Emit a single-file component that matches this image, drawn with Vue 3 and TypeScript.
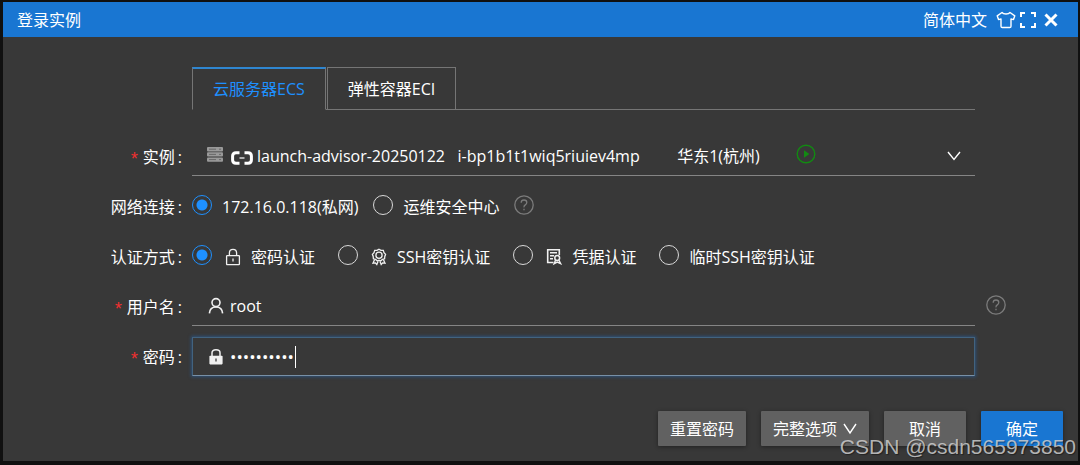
<script setup lang="ts">
import { ref } from 'vue'

type Tab = { id: string; label: string }
type AuthMode = { id: string; label: string; icon?: 'lock' | 'medal' | 'cert' }

const tabs: Tab[] = [
  { id: 'ecs', label: '云服务器ECS' },
  { id: 'eci', label: '弹性容器ECI' },
]
const activeTab = ref('ecs')

const gap = (n: number) => '\u00a0'.repeat(n)
const instances: string[] = [
  'launch-advisor-20250122' + gap(3) + 'i-bp1b1t1wiq5riuiev4mp' + gap(9) + '华东1(杭州)',
]
const instance = ref(instances[0])

const networks = [
  { id: 'private', label: '172.16.0.118(私网)' },
  { id: 'bastion', label: '运维安全中心' },
]
const network = ref('private')

const authModes: AuthMode[] = [
  { id: 'password', label: '密码认证', icon: 'lock' },
  { id: 'ssh', label: 'SSH密钥认证', icon: 'medal' },
  { id: 'credential', label: '凭据认证', icon: 'cert' },
  { id: 'temp', label: '临时SSH密钥认证' },
]
const auth = ref('password')

const username = ref('root')
const password = ref('xxxxxxxxxx')
</script>

<template>
  <div class="page">
    <section class="dialog" role="dialog" aria-labelledby="dialog-title">
      <header class="titlebar">
        <h1 id="dialog-title">登录实例</h1>
        <button type="button" class="plain lang">简体中文</button>
        <button type="button" class="plain" aria-label="主题">
          <svg width="20" height="18" viewBox="0 0 20 18" fill="none" stroke="#fff" stroke-width="1.4" stroke-linejoin="round">
            <path d="M6 1.5 L1.2 4.8 L2.5 8.6 L5 8 V15.2 Q5 16.5 6.3 16.5 H13.7 Q15 16.5 15 15.2 V8 L17.5 8.6 L18.8 4.8 L14 1.5 Q13 3 10 3 T6 1.5Z" />
          </svg>
        </button>
        <button type="button" class="plain" aria-label="全屏">
          <svg width="16" height="16" viewBox="0 0 16 16" fill="none" stroke="#fff" stroke-width="2">
            <path d="M1 5V1H5M11 1H15V5M15 11V15H11M5 15H1V11" />
          </svg>
        </button>
        <button type="button" class="plain close" aria-label="关闭">
          <svg width="14" height="14" viewBox="0 0 14 14" stroke="#fff" stroke-width="3">
            <path d="M1.5 1.5L12.5 12.5M12.5 1.5L1.5 12.5" />
          </svg>
        </button>
      </header>

      <form id="login" class="body" @submit.prevent>
        <div class="tabs" role="tablist">
          <button
            v-for="t in tabs"
            :key="t.id"
            type="button"
            role="tab"
            class="tab"
            :class="{ active: activeTab === t.id }"
            :aria-selected="activeTab === t.id"
            @click="activeTab = t.id"
          >{{ t.label }}</button>
        </div>

        <div class="row">
          <label class="label" for="instance"><span class="req">*</span>实例<i>:</i></label>
          <div class="field line">
            <div class="lead">
              <svg class="server" width="16" height="15" viewBox="0 0 16 15" fill="#9a9a9a">
                <rect width="16" height="4.4" rx="1" /><rect y="5.2" width="16" height="4.4" rx="1" /><rect y="10.4" width="16" height="4.4" rx="1" />
                <path d="M2 2.2H9M2 7.4H9M2 12.6H9M12 2.2H14M12 7.4H14M12 12.6H14" stroke="#5c5c5c" stroke-width="0.8" />
              </svg>
              <svg class="brand" width="22" height="14" viewBox="0 0 22 14" fill="none" stroke="#fff">
                <path d="M8.5 1.8H5Q1.6 1.8 1.6 5V9Q1.6 12.2 5 12.2H8.5M13.5 1.8H17Q20.4 1.8 20.4 5V9Q20.4 12.2 17 12.2H13.5" stroke-width="3" />
                <path d="M8.5 7H13.5" stroke-width="1.2" />
              </svg>
            </div>
            <select id="instance" v-model="instance">
              <option v-for="i in instances" :key="i" :value="i">{{ i }}</option>
            </select>
            <svg class="play" width="20" height="20" viewBox="0 0 20 20" fill="none" stroke="#128a12" stroke-width="1.4">
              <circle cx="10" cy="10" r="8.8" /><path d="M8 6.2V13.8L13.4 10Z" fill="#128a12" stroke="none" />
            </svg>
            <svg class="chev" width="14" height="10" viewBox="0 0 14 10" fill="none" stroke="#fff" stroke-width="1.4"><path d="M1 1L7 8.5L13 1" /></svg>
          </div>
        </div>

        <div class="row">
          <span id="net-label" class="label">网络连接<i>:</i></span>
          <div class="options networks" role="radiogroup" aria-labelledby="net-label">
            <label v-for="n in networks" :key="n.id" class="option">
              <input v-model="network" type="radio" name="network" :value="n.id" />
              <span>{{ n.label }}</span>
            </label>
            <button type="button" class="plain help" aria-label="帮助">
              <svg width="20" height="20" viewBox="0 0 20 20" fill="none" stroke="#7c7c7c" stroke-width="1.3">
                <circle cx="10" cy="10" r="9.2" /><path d="M7.2 7.8Q7.2 5 10 5T12.8 7.6Q12.8 9 11.3 9.9T10 12.4M10 13.8V15.2" />
              </svg>
            </button>
          </div>
        </div>

        <div class="row">
          <span id="auth-label" class="label">认证方式<i>:</i></span>
          <div class="options auths" role="radiogroup" aria-labelledby="auth-label">
            <label v-for="a in authModes" :key="a.id" class="option">
              <input v-model="auth" type="radio" name="auth" :value="a.id" />
              <svg v-if="a.icon" class="mode" width="16" height="18" viewBox="0 0 16 18" fill="none" stroke="#f0f0f0" stroke-width="1.3">
                <template v-if="a.icon === 'lock'">
                  <rect x="1.6" y="7.6" width="12.8" height="9" rx=".6" /><path d="M4.4 7.6V5Q4.4 1.4 8 1.4T11.6 5V7.6M8 10.5V13.6" />
                </template>
                <template v-else-if="a.icon === 'medal'">
                  <path d="M8 1.2L10 2.3L12.3 2.4L13 4.6L14.6 6.3L13.8 8.5L13.6 10.8L11.4 11.4L9.6 13L8 12.3L6.4 13L4.6 11.4L2.4 10.8L2.2 8.5L1.4 6.3L3 4.6L3.7 2.4L6 2.3Z" />
                  <circle cx="8" cy="7.2" r="3.1" /><path d="M3.6 11.4L2 15.2L4.4 14.9L5.8 16.6L7 13.5M12.4 11.4L14 15.2L11.6 14.9L10.2 16.6L9 13.5" />
                </template>
                <template v-else>
                  <path d="M7.5 14.5H1.7V1.7H13.3V7M4 4.7H11M4 7.7H8M4 10.7H7" stroke-width="1.6" />
                  <circle cx="11.2" cy="10" r="2.4" stroke-width="1.5" /><path d="M9.6 12L8.2 15.6L11.2 14L14.6 15.6L12.8 12" stroke-width="1.5" />
                </template>
              </svg>
              <span>{{ a.label }}</span>
            </label>
          </div>
        </div>

        <div class="row">
          <label class="label" for="user"><span class="req">*</span>用户名<i>:</i></label>
          <div class="field line">
            <svg class="prefix" width="16" height="18" viewBox="0 0 16 18" fill="none" stroke="#f0f0f0" stroke-width="1.6">
              <circle cx="8" cy="5.6" r="4" /><path d="M1.4 16.4Q1.8 10 8 10T14.6 16.4" />
            </svg>
            <input id="user" v-model="username" type="text" autocomplete="off" />
          </div>
          <button type="button" class="plain aside" aria-label="用户名帮助">
            <svg width="20" height="20" viewBox="0 0 20 20" fill="none" stroke="#7c7c7c" stroke-width="1.3">
              <circle cx="10" cy="10" r="9.2" /><path d="M7.2 7.8Q7.2 5 10 5T12.8 7.6Q12.8 9 11.3 9.9T10 12.4M10 13.8V15.2" />
            </svg>
          </button>
        </div>

        <div class="row">
          <label class="label" for="pwd"><span class="req">*</span>密码<i>:</i></label>
          <div class="field focus">
            <svg class="prefix" width="16" height="18" viewBox="0 0 16 18" fill="none" stroke="#f0f0f0" stroke-width="1.5">
              <path d="M4 8V4.8Q4 1.8 8 1.8T12 4.8V8" /><rect x="1.4" y="7.8" width="13.2" height="8.6" rx=".8" fill="#f0f0f0" stroke="none" /><path d="M8 10.5V13.5" stroke="#555" />
            </svg>
            <input id="pwd" v-model="password" type="password" autocomplete="off" />
            <span class="caret"></span>
          </div>
        </div>
      </form>

      <footer class="actions">
        <button type="button" class="btn">重置密码</button>
        <button type="button" class="btn">完整选项
          <svg width="14" height="12" viewBox="0 0 14 12" fill="none" stroke="#fff" stroke-width="1.4"><path d="M1 1L7 10L13 1" /></svg>
        </button>
        <button type="button" class="btn wide">取消</button>
        <button type="submit" form="login" class="btn wide primary">确定</button>
      </footer>
    </section>
    <div class="watermark">CSDN @csdn565973850</div>
  </div>
</template>

<style>
body {
  margin: 0;
  background: #101010;
}
</style>

<style scoped>
.page {
  position: relative;
  box-sizing: border-box;
  min-height: 100vh;
  padding: 2px 2px 4px 3px;
  display: flex;
  background: #101010;
  color: #fff;
  font-family: "Open Sans", "Noto Sans CJK SC", sans-serif;
  font-size: 16px;
  line-height: 24px;
}
.dialog {
  flex: 1;
  min-width: 0;
  display: flex;
  flex-direction: column;
  background: #383838;
}
button, input, select {
  font: inherit;
  color: inherit;
  box-sizing: border-box;
  margin: 0;
}
svg {
  display: block;
  flex: none;
}
.plain {
  padding: 0;
  border: 0;
  background: none;
  display: flex;
}
.titlebar {
  display: flex;
  align-items: center;
  gap: 4px;
  height: 35px;
  padding: 0 20px 0 14px;
  background: #1976d2;
}
h1 {
  margin: 0;
  flex: 1;
  font-size: 16px;
  font-weight: 400;
}
.lang {
  margin-right: 5px;
}
.close {
  margin-left: 4px;
}
.body {
  flex: 1;
  display: flex;
  flex-direction: column;
  gap: 11px;
  padding: 30px 103px 0 0;
}
.tabs {
  display: flex;
  margin: 0 0 16px 189px;
  height: 43px;
  box-sizing: border-box;
  border-bottom: 1px solid #757575;
}
.tab {
  height: 43px;
  padding: 0 20px;
  border: 1px solid #757575;
  background: #383838;
  white-space: nowrap;
}
.tab + .tab {
  margin-left: 1px;
}
.tab.active {
  color: #1e90ff;
  border-top: 2px solid #2f86d0;
  border-bottom-color: #383838;
}
.row {
  position: relative;
  display: grid;
  grid-template-columns: 181px minmax(0, 1fr);
  column-gap: 8px;
  align-items: center;
  height: 39px;
}
.label {
  display: flex;
  justify-content: flex-end;
  align-items: center;
  padding: 1px 2px 0 0;
  white-space: nowrap;
}
.label i {
  font-style: normal;
  margin-left: 3px;
}
.req {
  color: #f03030;
  font-family: "Liberation Mono", monospace;
  font-size: 18px;
  margin-right: 3px;
  padding-top: 5px;
}
.field {
  position: relative;
  display: flex;
  align-items: center;
  height: 39px;
  box-sizing: border-box;
}
.line {
  border-bottom: 1px solid #858585;
}
.lead {
  position: absolute;
  left: 15px;
  display: flex;
  align-items: center;
  gap: 8px;
  pointer-events: none;
}
.server {
  margin-bottom: 4px;
}
.brand {
  margin-top: 4px;
}
select {
  appearance: none;
  flex: 1;
  min-width: 0;
  height: 38px;
  padding: 0 40px 0 65px;
  border: 0;
  outline: 0;
  background: transparent;
}
option {
  background: #383838;
}
.play {
  position: absolute;
  left: 604px;
  margin-bottom: 4px;
  pointer-events: none;
}
.chev {
  position: absolute;
  right: 14px;
  pointer-events: none;
}
.field input {
  flex: 1;
  min-width: 0;
  height: 37px;
  padding: 0 12px 0 38px;
  border: 0;
  outline: 0;
  background: transparent;
  caret-color: transparent;
}
.field input[type="password"] {
  padding-left: 37px;
  font-size: 17px;
}
.prefix {
  position: absolute;
  left: 16px;
  pointer-events: none;
}
.focus {
  border: 1px solid #42637f;
  border-bottom-color: #7890a6;
  box-shadow: 0 0 3px 1px #2d5078;
}
.focus .prefix {
  left: 15px;
}
.caret {
  position: absolute;
  left: 102px;
  width: 1px;
  height: 22px;
  background: #fff;
}
.options {
  display: flex;
  align-items: center;
  white-space: nowrap;
}
.networks {
  gap: 15px;
}
.auths {
  gap: 23px;
}
.option {
  display: flex;
  align-items: center;
  gap: 10px;
}
.option input {
  appearance: none;
  flex: none;
  width: 20px;
  height: 20px;
  margin-bottom: 3px;
  border: 1px solid #d8d8d8;
  border-radius: 50%;
}
.option input:checked {
  border-color: #1e90ff;
  background: radial-gradient(circle, #1e90ff 5px, transparent 6px);
}
.mode {
  margin-left: 3px;
}
.help,
.aside {
  margin-bottom: 3px;
}
.aside {
  position: absolute;
  right: -31px;
}
.actions {
  display: flex;
  justify-content: flex-end;
  gap: 15px;
  padding: 15px;
}
.btn {
  display: flex;
  align-items: center;
  justify-content: center;
  gap: 6px;
  height: 35px;
  padding: 0 12px;
  border: 0;
  border-radius: 1px;
  background: #616161;
  box-shadow: 0 1px 4px rgba(0, 0, 0, 0.4);
  white-space: nowrap;
}
.wide {
  width: 82px;
}
.primary {
  background: #1976d2;
}
.watermark {
  position: absolute;
  right: 4px;
  bottom: 6px;
  font: 21px/24px "Liberation Sans", sans-serif;
  color: rgba(205, 205, 205, 0.85);
  text-shadow: 1px 1px 1px rgba(0, 0, 0, 0.4);
  pointer-events: none;
}
</style>
